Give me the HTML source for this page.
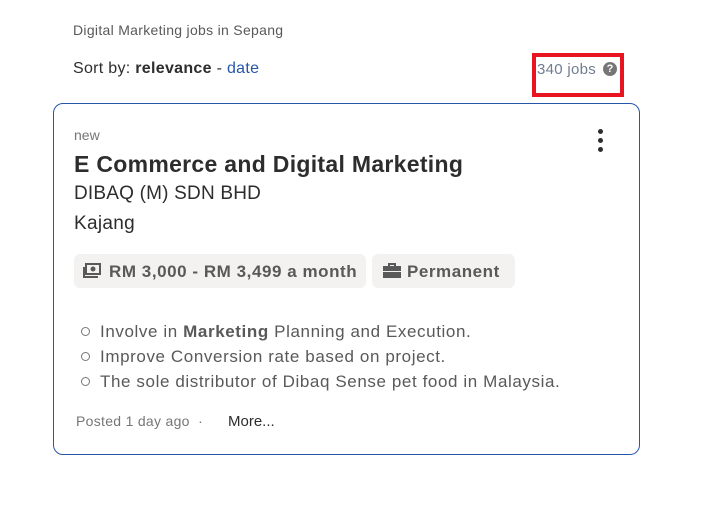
<!DOCTYPE html>
<html><head><style>
body{margin:0;width:711px;height:521px;background:#fff;font-family:"Liberation Sans",sans-serif;position:relative;overflow:hidden;color:#2d2d2d}
.a{position:absolute;white-space:nowrap}
.card{position:absolute;left:53px;top:103px;width:585px;height:350px;border:1px solid #2557a7;border-radius:10px}
.tag{position:absolute;top:254px;height:34px;background:#f3f2f1;border-radius:6px;font-weight:bold;font-size:17px;color:#595959;line-height:34px;letter-spacing:0.55px}
.li{position:absolute;left:100px;font-size:17px;color:#595959;letter-spacing:0.6px}
.dot{position:absolute;left:81px;width:7px;height:7px;border:1.3px solid #767676;border-radius:50%}
</style></head><body>
<div class="a" style="left:73px;top:22px;font-size:14px;color:#595959;letter-spacing:0.3px">Digital Marketing jobs in Sepang</div>
<div class="a" style="left:73px;top:60px;font-size:16px;letter-spacing:0.3px">Sort by: <b>relevance</b> - <span style="color:#2557a7">date</span></div>
<div class="a" style="left:532px;top:53px;width:84px;height:36px;border:4px solid #e8141f"></div>
<div class="a" style="left:537px;top:61px;font-size:15px;color:#6f7d91;letter-spacing:0.3px">340 jobs</div>
<div class="a" style="left:603px;top:62px;width:14px;height:14px;border-radius:50%;background:#767676;color:#fff;font-size:11px;font-weight:bold;text-align:center;line-height:14px">?</div>
<div class="card"></div>
<div class="a" style="left:598px;top:129px;width:5px;height:5px;border-radius:50%;background:#2d2d2d;box-shadow:0 9px 0 #2d2d2d,0 18px 0 #2d2d2d"></div>
<div class="a" style="left:74px;top:127px;font-size:14px;color:#767676">new</div>
<div class="a" style="left:74px;top:151px;font-size:23px;font-weight:bold;letter-spacing:0.3px">E Commerce and Digital Marketing</div>
<div class="a" style="left:74px;top:183px;font-size:19px;letter-spacing:0.2px">DIBAQ (M) SDN BHD</div>
<div class="a" style="left:74px;top:213px;font-size:19px;letter-spacing:0.3px">Kajang</div>
<div class="tag" style="left:74px;width:292px"><svg style="position:absolute;left:9px;top:9px" width="18" height="16" viewBox="0 0 18 16"><rect x="3" y="1" width="14" height="10" fill="none" stroke="#595959" stroke-width="2"/><circle cx="10" cy="6" r="2.5" fill="#595959"/><path d="M1 4v10h14" fill="none" stroke="#595959" stroke-width="2"/></svg><span style="position:absolute;left:35px;top:1px">RM 3,000 - RM 3,499 a month</span></div>
<div class="tag" style="left:372px;width:143px"><svg style="position:absolute;left:11px;top:9px" width="18" height="16" viewBox="0 0 18 16"><path d="M6 3V1h6v2" fill="none" stroke="#595959" stroke-width="2"/><rect x="0" y="3" width="18" height="5" fill="#595959"/><rect x="0" y="9" width="18" height="6" fill="#595959"/></svg><span style="position:absolute;left:35px;top:1px">Permanent</span></div>
<div class="dot" style="top:327px"></div><div class="li" style="top:322px">Involve in <b>Marketing</b> Planning and Execution.</div>
<div class="dot" style="top:352px"></div><div class="li" style="top:347px">Improve Conversion rate based on project.</div>
<div class="dot" style="top:377px"></div><div class="li" style="top:372px">The sole distributor of Dibaq Sense pet food in Malaysia.</div>
<div class="a" style="left:76px;top:413px;font-size:14px;color:#767676;letter-spacing:0.3px">Posted 1 day ago &nbsp;·</div>
<div class="a" style="left:228px;top:413px;font-size:15px">More...</div>
</body></html>
